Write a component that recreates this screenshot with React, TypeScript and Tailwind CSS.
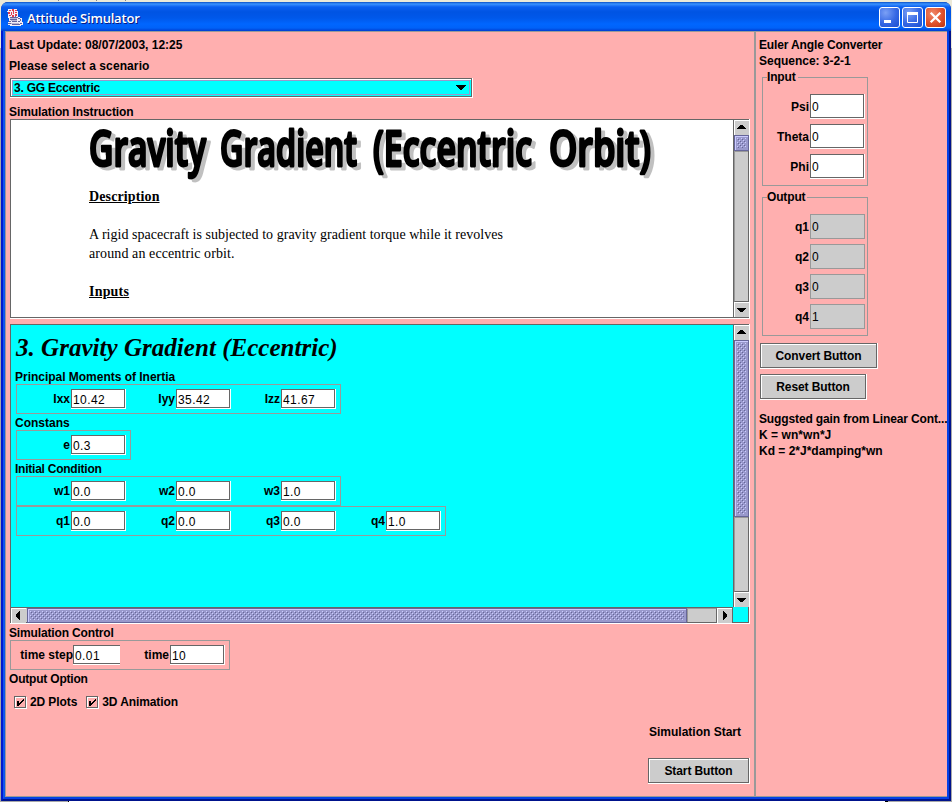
import React from "react";

const LABEL = "font-['Liberation_Sans',Arial,sans-serif] text-[12px] leading-4 font-bold text-black whitespace-nowrap";

function Label({ children, className = "" }: { children: React.ReactNode; className?: string }) {
  return <div className={`${LABEL} ${className}`}>{children}</div>;
}

function Field({ value, size = "h-5 w-[55px]", pad = "pt-[2px]" }: { value: string; size?: string; pad?: string }) {
  return (
    <div className={`${size} shrink-0 border-r border-b border-white`}>
      <div className="flex h-full w-full items-center border border-[#666] bg-white pl-px font-['Liberation_Sans',Arial,sans-serif] text-[12px] leading-4 tracking-[0.4px] text-black">
        <span className={pad}>{value}</span>
      </div>
    </div>
  );
}

function ParamRow({ items }: { items: [string, string][] }) {
  return (
    <div className="flex h-[30px] w-fit items-start border border-[#999] pt-1 pr-1 pl-1">
      {items.map(([k, v]) => (
        <div key={k} className="flex">
          <Label className="w-[50px] pt-0.5 pr-px text-right">{k}</Label>
          <Field value={v} />
        </div>
      ))}
    </div>
  );
}

function MetalButton({ children, className = "" }: { children: React.ReactNode; className?: string }) {
  return (
    <button className={`${className} block h-[26px] border-r border-b border-white`}>
      <span className="block h-full w-full border border-[#666]">
        <span className="flex h-full w-full items-center justify-center border-t border-l border-white bg-[#ccc] pr-px">
          <Label className="tracking-[-0.1px]">{children}</Label>
        </span>
      </span>
    </button>
  );
}

const ARROWS = {
  up: "M2 8h9v-1h-1v-1h-1v-1h-1v-1h-3v1h-1v1h-1v1h-1z",
  down: "M2 5h9v1h-1v1h-1v1h-1v1h-3v-1h-1v-1h-1v-1h-1z",
  left: "M8 2v9h-1v-1h-1v-1h-1v-1h-1v-3h1v-1h1v-1h1v-1z",
  right: "M5 2v9h1v-1h1v-1h1v-1h1v-3h-1v-1h-1v-1h-1v-1z",
};

function ArrowButton({ dir }: { dir: keyof typeof ARROWS }) {
  return (
    <div className="size-[15px] shrink-0 border-t border-l border-white bg-[#ccc]">
      <svg width="14" height="14" viewBox="0 0 14 14" shapeRendering="crispEdges">
        <path d={ARROWS[dir]} fill="#000" />
      </svg>
    </div>
  );
}

function Thumb({ className, id }: { className: string; id: string }) {
  return (
    <div className={`${className} shrink-0 border border-[#666699] bg-[#9999cc] p-0.5 shadow-[inset_1px_1px_0_#ccccff]`}>
      <svg className="block h-full w-full" shapeRendering="crispEdges">
        <defs>
          <pattern id={id} width="4" height="4" patternUnits="userSpaceOnUse">
            <path d="M0 0h1v1h-1zM2 2h1v1h-1z" fill="#ccccff" />
            <path d="M1 1h1v1h-1zM3 3h1v1h-1z" fill="#666699" />
          </pattern>
        </defs>
        <rect width="100%" height="100%" fill={`url(#${id})`} />
      </svg>
    </div>
  );
}

function CheckBox({ label }: { label: string }) {
  return (
    <div className="flex items-center">
      <div className="size-[12px] border border-[#666] shadow-[1px_1px_0_#fff,inset_1px_1px_0_#fff]">
        <svg width="10" height="10" viewBox="0 0 10 10" shapeRendering="crispEdges">
          <path d="M2 4h2v2h1v-1h1v-1h1v-1h1v-1h1v2h-1v1h-1v1h-1v1h-1v1h-1v1h-2z" fill="#000" />
        </svg>
      </div>
      <Label className="pl-[4px] tracking-[-0.1px]">{label}</Label>
    </div>
  );
}

function CaptionButton({ kind }: { kind: "min" | "max" | "close" }) {
  const fill =
    kind === "close"
      ? "bg-[radial-gradient(circle_at_35%_30%,#f08a6a,#e0512c_55%,#b93412)]"
      : "bg-[radial-gradient(circle_at_30%_25%,#7ba0f5,#3567e4_55%,#1c4fd0)]";
  return (
    <div className={`size-[21px] rounded-[3px] border border-white ${fill}`}>
      <svg width="19" height="19" viewBox="0 0 19 19" fill="none" stroke="#fff">
        {kind === "min" && <rect x="4" y="12" width="7" height="3" fill="#fff" stroke="none" />}
        {kind === "max" && <path d="M4.5 5v9.5h10V5" strokeWidth="1" />}
        {kind === "max" && <rect x="4" y="4" width="11" height="3" fill="#fff" stroke="none" />}
        {kind === "close" && <path d="M4.7 4.7l9.6 9.6M14.3 4.7l-9.6 9.6" strokeWidth="2.3" />}
      </svg>
    </div>
  );
}

function JavaIcon() {
  return (
    <svg width="16" height="17" viewBox="0 0 16 17" shapeRendering="crispEdges">
      <path d="M1 0h9v2h1v6h2v1h2v4h1v3h-2v1h-11v-1h-2v-3h1v-4h-1v-6h-1v-1h1z" fill="#f3eef6" />
      <path d="M2 1h2v1h-2zM5 0h2v2h-2zM8 1h2v1h-2zM1 3h2v2h-2zM4 3h1v3h-1zM6 2h1v3h-1zM8 3h2v1h-2zM8 5h2v2h-2zM2 6h2v1h-2zM5 6h2v2h-2z" fill="#e23a4c" />
      <path d="M3 8h8v1h-8zM11 9h2v1h-2zM13 10h1v2h-1zM11 12h2v1h-2zM3 10h7v1h-7zM2 12h2v1h-2zM5 12h5v1h-5zM1 14h3v1h-3zM5 15h8v1h-8zM13 14h2v1h-2zM8 7h1v1h-1z" fill="#64649c" />
      <path d="M3 9h7v1h-7zM4 11h6v1h-6zM4 14h8v1h-8z" fill="#b9b5d3" />
    </svg>
  );
}

function TitleBar() {
  return (
    <div className="flex h-[29px] shrink-0 items-start rounded-t-[7px] bg-[linear-gradient(to_bottom,#0a50c8_0,#3a92ff_2px,#0a5ef0_5px,#0054e3_10px,#0058ea_16px,#0066ff_22px,#0062f8_26px,#003dd0_29px)] pr-[5px] pl-[6px]">
      <div className="pt-[7px]"><JavaIcon /></div>
      <div className="pt-[7px] pl-[4px] font-['Open_Sans','Noto_Sans',sans-serif] text-[13px] leading-[18px] font-semibold tracking-[-0.2px] whitespace-nowrap text-white [text-shadow:1px_1px_0_#0a1883]">
        Attitude Simulator
      </div>
      <div className="ml-auto flex gap-0.5 pt-[5px]">
        <CaptionButton kind="min" />
        <CaptionButton kind="max" />
        <CaptionButton kind="close" />
      </div>
    </div>
  );
}

function Combo() {
  return (
    <div className="ml-px h-5 w-[463px] border-r border-b border-white">
      <div className="h-full border border-[#666] bg-[#0ff]">
        <div className="h-full border-t border-l border-white pr-px pb-px">
          <div className="flex h-full items-center justify-between border border-[#9999cc] pr-[3px] pl-[1px]">
            <Label className="tracking-[-0.22px]">3. GG Eccentric</Label>
            <svg width="10" height="5" viewBox="0 0 10 5" shapeRendering="crispEdges">
              <path d="M0 0h10v1h-1v1h-1v1h-1v1h-1v1h-2v-1h-1v-1h-1v-1h-1v-1h-1z" fill="#000" />
            </svg>
          </div>
        </div>
      </div>
    </div>
  );
}

const BANNER: [string, number, number][] = [
  ["Gravity", 1, 117],
  ["Gradient", 132, 137],
  ["(Eccentric", 285, 159],
  ["Orbit)", 461, 102],
];

function Instructions() {
  const serif = "font-['Liberation_Serif','Times_New_Roman',serif] text-black";
  return (
    <div className="ml-px h-[200px] w-[740px] border-r border-b border-white">
      <div className="flex h-full border border-[#666] bg-white">
        <div className="min-w-0 flex-1 pl-[77px]">
          <svg
            className="block overflow-visible drop-shadow-[4px_3px_0_#c0c0c0]"
            width="580"
            height="67"
            viewBox="0 0 580 67"
            fontFamily="'Comic Sans MS','Open Sans',sans-serif"
            fontSize="48"
            fontWeight="600"
            strokeLinejoin="round"
            strokeLinecap="round"
            fill="#000"
            stroke="#000"
            strokeWidth="2.8"
          >
            {BANNER.map(([word, x, width]) => (
              <text key={word} x={x} y="46" textLength={width} lengthAdjust="spacingAndGlyphs">{word}</text>
            ))}
          </svg>
          <div className={`${serif} pl-px text-[14px] leading-[19px] tracking-[0.03px]`}>
            <div><span className="pr-px font-bold tracking-[0.12px] underline">Description</span></div>
            <div className="pt-[19px]">
              <div>A rigid spacecraft is subjected to gravity gradient torque while it revolves</div>
              <div className="tracking-[0.1px]">around an eccentric orbit.</div>
            </div>
            <div className="pt-[19px]"><span className="pr-px font-bold tracking-[0.2px] underline">Inputs</span></div>
          </div>
        </div>
        <div className="flex w-[15px] flex-col border-l border-[#666] bg-[#ccc]">
          <ArrowButton dir="up" />
          <Thumb className="h-4 w-[15px]" id="dotsA" />
          <div className="flex-1 border-t border-b border-l border-t-[#999] border-b-[#666] border-l-[#999]" />
          <ArrowButton dir="down" />
        </div>
      </div>
    </div>
  );
}

function ScenarioPane() {
  return (
    <div className="ml-px h-[300px] w-[740px] border-r border-b border-white">
      <div className="flex h-full flex-col border border-[#666] bg-[#0ff]">
        <div className="flex flex-1">
          <div className="min-w-0 flex-1 pl-[5px]">
            <div className="h-[43px] pt-[9px] font-['Liberation_Serif','Times_New_Roman',serif] text-[25px] leading-7 font-bold tracking-[0.03px] whitespace-nowrap text-black italic">
              3. Gravity Gradient (Eccentric)
            </div>
            <Label className="-ml-px h-4 pt-px tracking-[-0.02px]">Principal Moments of Inertia</Label>
            <ParamRow items={[["Ixx", "10.42"], ["Iyy", "35.42"], ["Izz", "41.67"]]} />
            <Label className="-ml-px h-4 pt-px">Constans</Label>
            <ParamRow items={[["e", "0.3"]]} />
            <Label className="-ml-px h-4 pt-px tracking-[-0.24px]">Initial Condition</Label>
            <ParamRow items={[["w1", "0.0"], ["w2", "0.0"], ["w3", "1.0"]]} />
            <ParamRow items={[["q1", "0.0"], ["q2", "0.0"], ["q3", "0.0"], ["q4", "1.0"]]} />
          </div>
          <div className="flex w-[15px] flex-col border-l border-[#666] bg-[#ccc]">
            <ArrowButton dir="up" />
            <Thumb className="h-[177px] w-[15px]" id="dotsB" />
            <div className="flex-1 border-t border-b border-l border-t-[#999] border-b-[#666] border-l-[#999]" />
            <ArrowButton dir="down" />
          </div>
        </div>
        <div className="flex h-[15px] shrink-0">
          <div className="flex w-[722px] border-t border-r border-[#666] bg-[#ccc]">
            <ArrowButton dir="left" />
            <Thumb className="ml-px h-[15px] w-[660px]" id="dotsC" />
            <div className="flex-1 border-t border-r border-l border-t-[#999] border-r-[#666] border-l-[#999]" />
            <ArrowButton dir="right" />
          </div>
        </div>
      </div>
    </div>
  );
}

function GroupBox({ title, className = "", children }: { title: string; className?: string; children: React.ReactNode }) {
  return (
    <fieldset className={`${className} ml-[3px] w-[106px] border border-[#999] px-[2px]`}>
      <legend className={`${LABEL} ml-[2px] h-4 pr-[2px] tracking-[-0.15px]`}>{title}</legend>
      {children}
    </fieldset>
  );
}

function ConverterPanel() {
  return (
    <div className="w-[191px] pt-[5px] pl-[3px]">
      <Label className="tracking-[-0.14px]">Euler Angle Converter</Label>
      <Label className="tracking-[-0.02px]">Sequence: 3-2-1</Label>
      <GroupBox title="Input" className="h-[117px]">
        <div className="flex flex-col gap-[5px] pt-[9px]">
          {["Psi", "Theta", "Phi"].map((k) => (
            <div key={k} className="flex h-[25px] items-center justify-end">
              <Label className="pr-px">{k}</Label>
              <Field value="0" size="h-[25px] w-[55px]" pad="pt-px" />
            </div>
          ))}
        </div>
      </GroupBox>
      <GroupBox title="Output" className="mt-[3px] h-[147px]">
        <div className="flex flex-col gap-[5px] pt-[9px]">
          {[["q1", "0"], ["q2", "0"], ["q3", "0"], ["q4", "1"]].map(([k, v]) => (
            <div key={k} className="flex h-[25px] items-center justify-end">
              <Label className="pr-px">{k}</Label>
              <div className="flex h-[25px] w-[55px] items-center border border-[#999] bg-[#ccc] pl-px font-['Liberation_Sans',Arial,sans-serif] text-[12px] text-black">{v}</div>
            </div>
          ))}
        </div>
      </GroupBox>
      <MetalButton className="mt-[7px] ml-px w-[118px]">Convert Button</MetalButton>
      <MetalButton className="mt-[5px] ml-px w-[107px]">Reset Button</MetalButton>
      <Label className="mt-[11px] tracking-[-0.13px]">Suggsted gain from Linear Cont...</Label>
      <Label className="tracking-[0.06px]">K = wn*wn*J</Label>
      <Label>Kd = 2*J*damping*wn</Label>
    </div>
  );
}

export default function App() {
  return (
    <div className="flex h-[802px] w-[952px] flex-col overflow-hidden bg-[linear-gradient(to_bottom,#ece9d8_0,#ece9d8_48px,#a8a8a8_48px)]">
      <div className="flex h-[2px] shrink-0 gap-[28px] pl-[58px]">
        <div className="h-px w-px bg-[#888]" />
        <div className="ml-[9px] h-px w-px bg-[#888]" />
        <div className="h-px w-px bg-[#888]" />
      </div>
      <div className="ml-px flex h-[799px] w-[950px] shrink-0 flex-col rounded-t-[7px] bg-[#001590]">
        <TitleBar />
        <div className="flex flex-1 border-2 border-t-0 border-r-[#00138c] border-b-[#00138c] border-l-[#0019cf]">
          <div className="flex flex-1 border-2 border-t-0 border-r-[#0440e6] border-b-[#0440e6] border-l-[#0f55ee]">
            <div className="flex flex-1 border-t border-b border-l border-[#999] bg-[#ffafaf]">
              <div className="w-[748px] pt-[5px] pl-[3px]">
                <Label>Last Update: 08/07/2003, 12:25</Label>
                <Label className="mt-[5px] tracking-[0.1px]">Please select a scenario</Label>
                <div className="mt-[4px]"><Combo /></div>
                <Label className="mt-[5px] h-4 pt-px tracking-[-0.1px]">Simulation Instruction</Label>
                <Instructions />
                <div className="mt-[5px]"><ScenarioPane /></div>
                <Label className="mt-px h-[15px] tracking-[-0.15px]">Simulation Control</Label>
                <div className="ml-px flex h-[30px] w-[220px] border border-[#999] pt-1">
                  <Label className="w-[62px] pt-0.5 text-right">time step</Label>
                  <div className="w-[47px] overflow-hidden"><Field value="0.01" /></div>
                  <Label className="w-[50px] pt-0.5 pr-px text-right">time</Label>
                  <Field value="10" />
                </div>
                <Label className="mt-px tracking-[-0.2px]">Output Option</Label>
                <div className="mt-[7px] flex gap-[9px] pl-[5px]">
                  <CheckBox label="2D Plots" />
                  <CheckBox label="3D Animation" />
                </div>
                <div className="ml-px flex w-[740px] flex-col items-end pt-[14px]">
                  <Label className="pr-[9px]">Simulation Start</Label>
                  <MetalButton className="mt-[18px] w-[102px]">Start Button</MetalButton>
                </div>
              </div>
              <div className="w-0.5 bg-[#999]" />
              <ConverterPanel />
            </div>
          </div>
        </div>
      </div>
      <div className="flex h-px shrink-0">
        <div className="w-[68px] bg-[#a8a8a8]" />
        <div className="w-px bg-black" />
        <div className="w-[816px] bg-white" />
        <div className="w-[3px] bg-black" />
        <div className="flex-1 bg-[#a8a8a8]" />
      </div>
    </div>
  );
}
